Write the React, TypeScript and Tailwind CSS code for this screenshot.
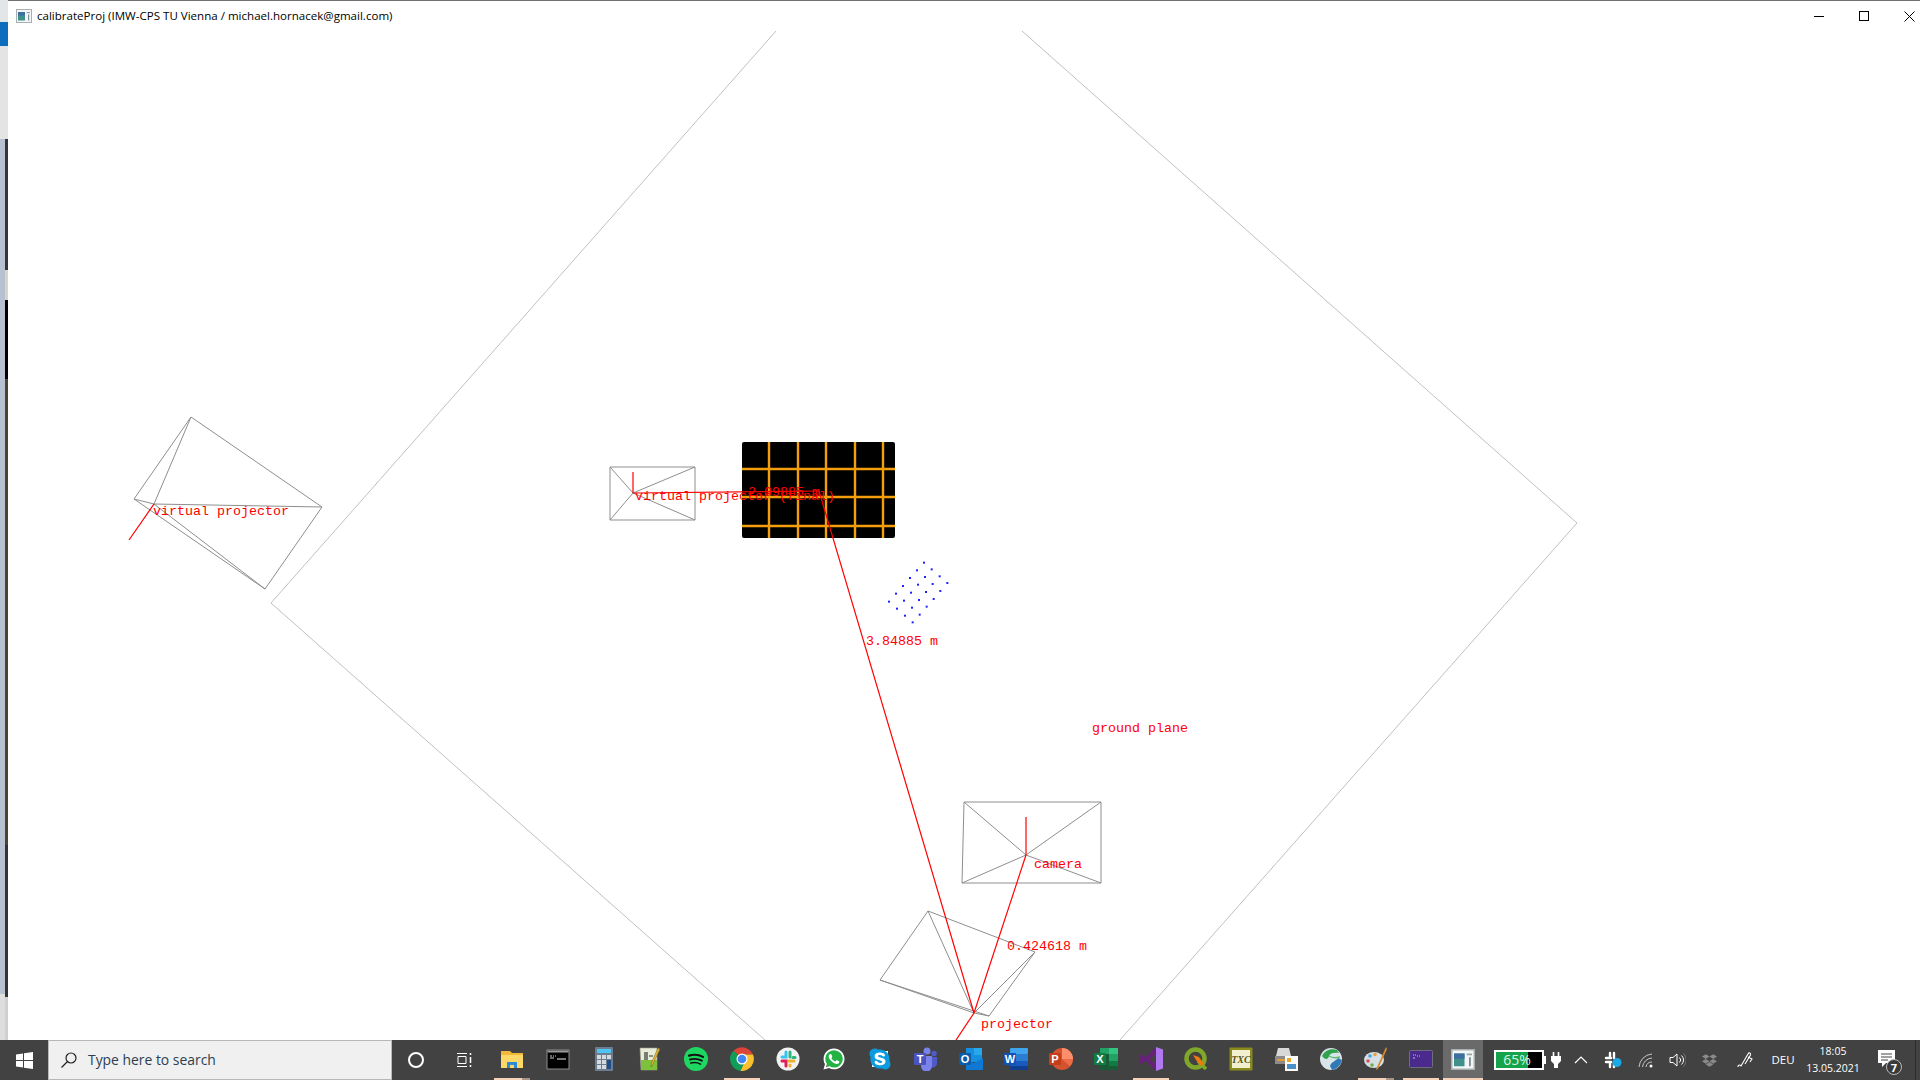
import React from 'react';
import { FaDropbox, FaSkype, FaWhatsapp } from 'react-icons/fa';

// scene geometry, all in screen pixels (the svg viewBox starts at the window's corner)
const GRAY_LINES = [
  // virtual projector
  [191, 417, 322, 507], [322, 507, 265, 589], [265, 589, 134, 499], [134, 499, 191, 417],
  [154, 504, 191, 417], [154, 504, 322, 507], [154, 504, 265, 589], [154, 504, 134, 499],
  // virtual projector (final)
  [610, 467, 695, 467], [695, 467, 695, 520], [695, 520, 610, 520], [610, 520, 610, 467],
  [633, 493, 610, 467], [633, 493, 695, 467], [633, 493, 695, 520], [633, 493, 610, 520],
  // camera
  [964, 802, 1101, 802], [1101, 802, 1101, 883], [1101, 883, 962, 883], [962, 883, 964, 802],
  [1026, 855, 964, 802], [1026, 855, 1101, 802], [1026, 855, 1101, 883], [1026, 855, 962, 883],
  // projector
  [928, 911, 1035, 952], [1035, 952, 989, 1016], [989, 1016, 880, 980], [880, 980, 928, 911],
  [974, 1013, 928, 911], [974, 1013, 1035, 952], [974, 1013, 989, 1016], [974, 1013, 880, 980],
];

const RED_LINES = [
  [154, 504, 129, 540],
  [633, 493, 633, 472],
  [633, 493, 819, 491],
  [819, 491, 974, 1013],
  [1026, 855, 1026, 817],
  [1026, 855, 974, 1013],
  [974, 1013, 956, 1040],
];

const LABELS = [
  { x: 153, y: 515, text: 'virtual projector' },
  { x: 635, y: 500, text: 'virtual projector (final)' },
  { x: 748, y: 496, text: '2.09885 m' },
  { x: 866, y: 645, text: '3.84885 m' },
  { x: 1092, y: 732, text: 'ground plane' },
  { x: 1034, y: 868, text: 'camera' },
  { x: 1007, y: 950, text: '0.424618 m' },
  { x: 981, y: 1028, text: 'projector' },
];

const DOTS = [
  [222, 68], [245, 88], [269, 109], [292, 129],
  [201, 91], [225, 111], [248, 132], [271, 153],
  [180, 114], [204, 134], [228, 156], [251, 177],
  [159, 138], [183, 158], [207, 180], [230, 200],
  [138, 161], [162, 182], [186, 203], [209, 224],
  [117, 185], [141, 206], [165, 227], [188, 247],
];

const GRID_X = [769, 798, 826, 855, 883];
const GRID_Y = [469, 497, 526];

function Scene() {
  return (
    <svg className="absolute inset-0 h-full w-full" viewBox="8 31 1912 1009">
      <polyline points="776,31 271,603 765,1040" fill="none" stroke="#c0c0c0" strokeWidth="1" />
      <polyline points="1022,31 1577,523 1120,1040" fill="none" stroke="#c0c0c0" strokeWidth="1" />

      <rect x="742" y="442" width="153" height="96" rx="2" fill="#000" />
      {GRID_X.map((x) => (
        <line key={x} x1={x} y1="442" x2={x} y2="538" stroke="#f59e0b" strokeWidth="2.4" />
      ))}
      {GRID_Y.map((y) => (
        <line key={y} x1="742" y1={y} x2="895" y2={y} stroke="#f59e0b" strokeWidth="2.4" />
      ))}

      {GRAY_LINES.map((l, i) => (
        <line key={i} x1={l[0]} y1={l[1]} x2={l[2]} y2={l[3]} stroke="#8e8e8e" strokeWidth="1" />
      ))}
      {RED_LINES.map((l, i) => (
        <line key={i} x1={l[0]} y1={l[1]} x2={l[2]} y2={l[3]} stroke="#ff0000" strokeWidth="1.2" />
      ))}
      {DOTS.map((d, i) => (
        <rect key={i} x={850 + d[0] / 3 - 1} y={540 + d[1] / 3 - 1} width="2" height="2" fill="#2222ff" />
      ))}
      {LABELS.map((l) => (
        <text key={l.text} x={l.x} y={l.y} fill="#ff0000" className="font-['Liberation_Mono',monospace] text-[13.33px]">
          {l.text}
        </text>
      ))}
    </svg>
  );
}

function WinIcon({ size }: { size: number }) {
  return (
    <svg width={size} height={size * 0.875} viewBox="0 0 16 14">
      <rect x="0.5" y="0.5" width="15" height="13" fill="#f4f6f6" stroke="#a9aeb0" />
      <rect x="2" y="3" width="7" height="8.5" fill="#3f8f8a" />
      <rect x="2" y="3" width="7" height="3.5" fill="#3c6f9f" />
      <rect x="10.5" y="3" width="3.5" height="1.2" fill="#9aa6ad" />
      <rect x="12" y="5.5" width="1.2" height="6" fill="#7d8b94" />
    </svg>
  );
}

const Svg = ({ children, size = 24 }: { children: React.ReactNode; size?: number }) => (
  <svg width={size} height={size} viewBox="0 0 24 24">
    {children}
  </svg>
);

const Letter = ({ x, y, size, fill = '#fff', children }: { x: number; y: number; size: number; fill?: string; children: string }) => (
  <text x={x} y={y} fontSize={size} fontWeight="700" fill={fill} textAnchor="middle" className="font-['Liberation_Sans',sans-serif]">
    {children}
  </text>
);

const APPS: { id: string; icon: React.ReactNode; bar?: boolean; stacked?: boolean }[] = [
  {
    id: 'explorer',
    bar: true,
    stacked: true,
    icon: (
      <Svg>
        <path d="M1 4h9l2 2h11v15H1z" fill="#f0b93a" />
        <path d="M1 8h22v13H1z" fill="#fcd869" />
        <path d="M7 21v-6h10v6h-3v-3h-4v3z" fill="#2a8ad4" />
      </Svg>
    ),
  },
  {
    id: 'cmd',
    icon: (
      <Svg>
        <rect x="1" y="3" width="22" height="19" fill="#000" stroke="#8d8d8d" />
        <rect x="1.5" y="3.5" width="21" height="2" fill="#9a9a9a" />
        <path d="M4 9h2M7 9h1M9 9h1M4 11h4" stroke="#ccc" strokeWidth="1" />
        <path d="M11 12h9" stroke="#eee" strokeWidth="1" />
      </Svg>
    ),
  },
  {
    id: 'calc',
    icon: (
      <Svg>
        <rect x="3" y="0" width="18" height="24" rx="1" fill="#6d7d90" />
        <rect x="5" y="2" width="14" height="4" fill="#50c4f2" />
        <path d="M5 8h4v4H5zM10 8h4v4h-4zM15 8h4v4h-4zM5 13h4v4H5zM10 13h4v4h-4zM5 18h4v4H5zM10 18h4v4h-4z" fill="#d5dae0" />
        <rect x="15" y="13" width="4" height="9" fill="#1f4f86" />
      </Svg>
    ),
  },
  {
    id: 'notepad',
    icon: (
      <Svg>
        <path d="M2 1h17v22H3z" fill="#e9ecd9" stroke="#9a9a8a" strokeWidth="0.6" />
        <path d="M3 13h16v10H3z" fill="#7ec13c" />
        <path d="M7 5v8M9 5v8" stroke="#333" strokeWidth="1.2" />
        <path d="M11 9h4" stroke="#555" strokeWidth="1.2" />
        <path d="M22 2l-7 15-2 3 .4-4L20 1z" fill="#e2b93a" stroke="#7a5a10" strokeWidth="0.5" />
      </Svg>
    ),
  },
  {
    id: 'spotify',
    icon: (
      <Svg>
        <circle cx="12" cy="12" r="12" fill="#1ed760" />
        <path d="M5 8.6c4.600-1.300 9.800-1 14 1.300" fill="none" stroke="#111" strokeWidth="2.200" strokeLinecap="round" />
        <path d="M6 12.500c4-1 8.300-.7 11.800 1.200" fill="none" stroke="#111" strokeWidth="1.900" strokeLinecap="round" />
        <path d="M6.800 16c3.400-.8 6.800-.5 9.700 1.100" fill="none" stroke="#111" strokeWidth="1.600" strokeLinecap="round" />
      </Svg>
    ),
  },
  {
    id: 'chrome',
    bar: true,
    icon: (
      <Svg>
        <path d="M12 12L3.500 3.700A12 12 0 0 1 23 7.500H12z" fill="#db4437" />
        <path d="M12 12L3.500 3.700A12 12 0 0 0 10.500 23.900L16 12z" fill="#0f9d58" />
        <path d="M23 7.500A12 12 0 0 1 10.500 23.900L16 12 12 7.500z" fill="#fbc02d" />
        <circle cx="12" cy="12" r="5.500" fill="#fff" />
        <circle cx="12" cy="12" r="4.300" fill="#4285f4" />
      </Svg>
    ),
  },
  {
    id: 'slack',
    icon: (
      <Svg>
        <circle cx="12" cy="12" r="11.500" fill="#f2f2f2" />
        <path d="M10 5v5H6" fill="none" stroke="#36c5f0" strokeWidth="3" strokeLinecap="round" />
        <path d="M14 5v5" fill="none" stroke="#2eb67d" strokeWidth="3" strokeLinecap="round" />
        <path d="M19 10.500h-2" fill="none" stroke="#2eb67d" strokeWidth="3" strokeLinecap="round" />
        <path d="M18 14h-5" fill="none" stroke="#ecb22e" strokeWidth="3" strokeLinecap="round" />
        <path d="M14 19v-1" fill="none" stroke="#ecb22e" strokeWidth="3" strokeLinecap="round" />
        <path d="M10 19v-5H6" fill="none" stroke="#e01e5a" strokeWidth="3" strokeLinecap="round" />
      </Svg>
    ),
  },
  {
    id: 'whatsapp',
    icon: (
      <span className="relative flex h-6 w-6 items-center justify-center">
        <span className="absolute h-5 w-5 rounded-full bg-[#25b244]" />
        <FaWhatsapp className="relative h-6 w-6 text-white" />
      </span>
    ),
  },
  {
    id: 'skype',
    icon: (
      <span className="relative flex h-6 w-6 items-center justify-center">
        <span className="absolute h-4 w-4 bg-white" />
        <FaSkype className="relative h-6 w-6 text-[#0a9be0]" />
      </span>
    ),
  },
  {
    id: 'teams',
    icon: (
      <Svg>
        <circle cx="13" cy="4" r="3.500" fill="#7b83eb" />
        <circle cx="20" cy="6.500" r="2.800" fill="#5059c9" />
        <path d="M16 10h7v7a4 4 0 0 1-7 2z" fill="#5059c9" />
        <path d="M7 9h11v10a5.500 5.500 0 0 1-11 0z" fill="#7b83eb" />
        <rect x="0" y="6" width="12" height="12" rx="1" fill="#4b53bc" />
        <Letter x={6} y={16} size={11}>T</Letter>
      </Svg>
    ),
  },
  {
    id: 'outlook',
    icon: (
      <Svg>
        <rect x="7" y="1" width="16" height="14" fill="#1490df" />
        <rect x="15" y="1" width="8" height="7" fill="#28a8ea" />
        <path d="M7 12l8 4 9-5v12H7z" fill="#0f78d4" />
        <rect x="0" y="6" width="12" height="12" rx="1" fill="#0a5ca8" />
        <Letter x={6} y={16} size={11}>O</Letter>
      </Svg>
    ),
  },
  {
    id: 'word',
    icon: (
      <Svg>
        <rect x="6" y="1" width="18" height="6" rx="1" fill="#41a5ee" />
        <rect x="6" y="7" width="18" height="7" fill="#2b7cd3" />
        <rect x="6" y="14" width="18" height="5" fill="#185abd" />
        <rect x="6" y="19" width="18" height="4" rx="1" fill="#103f91" />
        <rect x="0" y="6" width="12" height="12" rx="1" fill="#1252b4" />
        <Letter x={6} y={16} size={11}>W</Letter>
      </Svg>
    ),
  },
  {
    id: 'powerpoint',
    icon: (
      <Svg>
        <circle cx="13" cy="12" r="11" fill="#d35230" />
        <path d="M13 1a11 11 0 0 1 11 11H13z" fill="#ff8f6b" />
        <path d="M13 12h11a11 11 0 0 1-3 7.500z" fill="#ed6c47" />
        <rect x="0" y="6" width="12" height="12" rx="1" fill="#c43e1c" />
        <Letter x={6} y={16} size={11}>P</Letter>
      </Svg>
    ),
  },
  {
    id: 'excel',
    icon: (
      <Svg>
        <rect x="6" y="1" width="18" height="22" rx="1" fill="#185c37" />
        <rect x="15" y="1" width="9" height="6" fill="#33c481" />
        <rect x="6" y="1" width="9" height="6" fill="#21a366" />
        <rect x="15" y="7" width="9" height="7" fill="#21a366" />
        <rect x="15" y="14" width="9" height="5" fill="#107c41" />
        <rect x="0" y="6" width="12" height="12" rx="1" fill="#107c41" />
        <Letter x={6} y={16} size={11}>X</Letter>
      </Svg>
    ),
  },
  {
    id: 'vs',
    bar: true,
    icon: (
      <Svg>
        <path d="M17 0l7 2.500v19L17 24V0z" fill="#b179f1" />
        <path d="M17 0L6.500 10.500 2 7 0 8v8l2 1 4.500-3.500L17 24v-6.500L10.500 12 17 6.500z" fill="#68217a" />
      </Svg>
    ),
  },
  {
    id: 'qgis',
    icon: (
      <Svg>
        <circle cx="11.500" cy="11.500" r="9" fill="none" stroke="#7fa82a" strokeWidth="4.500" />
        <path d="M14 14l8 8" stroke="#7fa82a" strokeWidth="3.500" />
        <path d="M9 8l6 2 5 7-3 2-5-6z" fill="#ee7913" />
      </Svg>
    ),
  },
  {
    id: 'texc',
    icon: (
      <Svg>
        <rect x="0.500" y="0.500" width="23" height="23" rx="1" fill="#8a8a1f" />
        <rect x="3" y="3" width="18" height="18" fill="#f2f0cf" />
        <text x="12" y="16" fontSize="10" fontStyle="italic" fontWeight="700" fill="#55551a" textAnchor="middle" className="font-['Liberation_Serif',serif]">
          TXC
        </text>
      </Svg>
    ),
  },
  {
    id: 'printer',
    icon: (
      <Svg>
        <path d="M4 1h11l2 8H2z" fill="#d8d8d8" />
        <rect x="1" y="9" width="17" height="8" fill="#8b8b8b" />
        <rect x="3" y="12" width="10" height="2" fill="#e79b2c" />
        <rect x="11" y="9" width="13" height="15" fill="#fafafa" />
        <rect x="13" y="11" width="4" height="4" fill="#e7a92c" />
        <rect x="13" y="17" width="9" height="5" fill="#4a90c8" />
      </Svg>
    ),
  },
  {
    id: 'globe',
    icon: (
      <Svg>
        <circle cx="12" cy="12" r="11" fill="#d9e4e8" />
        <path d="M3 9c3-6 9-8 15-6l2 3c-5-1-9 0-10 3-1 4-4 4-7 0z" fill="#2ea24c" />
        <path d="M13 23c5-1 9-5 10-10l-4-2c-2 3-7 4-8 8z" fill="#2f79b5" />
        <path d="M10 9c3 2 7 2 11 1" fill="none" stroke="#5dbb6a" strokeWidth="1.500" />
      </Svg>
    ),
  },
  {
    id: 'paint',
    bar: true,
    stacked: true,
    icon: (
      <Svg>
        <ellipse cx="10" cy="13" rx="10" ry="8" fill="#d5dfe6" />
        <circle cx="6" cy="9" r="1.800" fill="#4aa3df" />
        <circle cx="11" cy="7.500" r="1.800" fill="#e8a13a" />
        <circle cx="4" cy="14" r="1.800" fill="#d9534f" />
        <circle cx="8" cy="18" r="1.800" fill="#6ab04c" />
        <path d="M22 0l1 2-9 20-2 1 1-3z" fill="#d88a2e" />
      </Svg>
    ),
  },
  {
    id: 'terminal',
    bar: true,
    icon: (
      <Svg>
        <rect x="0.500" y="3.500" width="23" height="17" rx="1" fill="#4a2a8c" stroke="#6d6d7d" />
        <path d="M4 8h1M6 8h1M8 9h1M10 9h1M4 11h2" stroke="#c6bde0" strokeWidth="1" />
      </Svg>
    ),
  },
];

export default function App() {
  return (
    <div className="flex h-screen w-[1920px] flex-col overflow-hidden bg-white font-['Open_Sans',sans-serif]">
      <div className="flex h-[1040px]">
        {/* bit of the desktop showing behind the window */}
        <div className="flex w-[5px] flex-col">
          <div className="h-[22px] bg-[#e2e6e6]" />
          <div className="h-[24px] bg-[#0c6ebd]" />
          <div className="h-[93px] bg-[#e4e4e4]" />
          <div className="h-[855px] bg-[#b6c2d2]" />
          <div className="flex-1 bg-[#dedede]" />
        </div>
        <div className="flex w-[3px] flex-col">
          <div className="h-[22px] bg-[#e2e6e6]" />
          <div className="h-[24px] bg-[#0c6ebd]" />
          <div className="h-[93px] bg-[#e4e4e4]" />
          <div className="h-[131px] bg-[#33343c]" />
          <div className="h-[30px] bg-[#d8d4c8]" />
          <div className="h-[79px] bg-black" />
          <div className="h-[466px] bg-[#4e4232]" />
          <div className="h-[152px] bg-[#333333]" />
          <div className="flex-1 bg-[#d0d0d0]" />
        </div>

        <div className="flex flex-1 flex-col border-t border-[#707070]">
          <div className="flex h-[30px] items-center">
            <div className="ml-[8px] flex w-[21px] shrink-0">
              <WinIcon size={16} />
            </div>
            <span className="text-[11.55px] leading-none text-black">calibrateProj (IMW-CPS TU Vienna / michael.hornacek@gmail.com)</span>
            <div className="ml-auto flex items-center">
              <div className="flex w-[45px] justify-center">
                <div className="h-px w-[10px] bg-black" />
              </div>
              <div className="flex w-[45px] justify-center">
                <div className="h-[10px] w-[10px] border border-black" />
              </div>
              <div className="flex w-[34px] pl-[18px]">
                <svg width="11" height="11" viewBox="0 0 11 11">
                  <path d="M0.500 0.500l10 10M10.500 0.500l-10 10" stroke="#000" strokeWidth="1" />
                </svg>
              </div>
            </div>
          </div>
          <div className="relative flex-1 overflow-hidden">
            <Scene />
          </div>
        </div>
      </div>

      {/* taskbar */}
      <div className="flex h-10 items-center bg-[#424242] text-white">
        <div className="flex h-full w-12 items-center justify-center">
          <svg width="17" height="17" viewBox="0 0 17 17">
            <path d="M0 2.500l7-1v6.500H0zM8 1.300L17 0v8H8zM0 9h7v6.500l-7-1zM8 9h9v8l-9-1.300z" fill="#fff" />
          </svg>
        </div>
        <div className="flex h-full w-[344px] items-center border border-[#b8b8b8] bg-[#f0f0f0]">
          <svg className="ml-[11px]" width="18" height="18" viewBox="0 0 18 18">
            <circle cx="11" cy="7" r="5" fill="none" stroke="#222" strokeWidth="1.200" />
            <path d="M7.500 10.500L1.500 16.500" stroke="#222" strokeWidth="1.200" />
          </svg>
          <span className="ml-[10px] text-[13.9px] text-[#2c3e50]">Type here to search</span>
        </div>
        <div className="flex h-full w-12 items-center justify-center">
          <div className="h-4 w-4 rounded-full border-[2.5px] border-white" />
        </div>
        <div className="flex h-full w-[47px] items-center justify-center">
          <svg width="16" height="16" viewBox="0 0 16 16">
            <path d="M1 1.500h10M1 14.500h10M2 4.500h8v7H2z" fill="none" stroke="#fff" strokeWidth="1" />
            <path d="M14.500 1v2M14.500 5v6M14.500 13v2" stroke="#fff" strokeWidth="1.500" />
          </svg>
        </div>

        <div className="ml-[2px] flex h-full">
          {APPS.map((app, i) => (
            <div key={app.id} className={`relative flex h-full items-center justify-center pb-[2px] ${i < 9 ? 'w-[46px]' : 'w-[45px]'}`}>
              {app.icon}
              {app.bar && (
                <div className="absolute bottom-0 left-1/2 flex h-[2px] w-[36px] -translate-x-1/2 bg-[#f6d2b8]">
                  {app.stacked && <div className="ml-auto w-[8px] bg-[#a89688]" />}
                </div>
              )}
            </div>
          ))}
        </div>
        <div className="relative flex h-full w-10 items-center justify-center bg-[#6a6a6a] pb-[2px]">
          <WinIcon size={24} />
          <div className="absolute inset-x-0 bottom-0 h-[2px] bg-[#f6d2b8]" />
        </div>

        {/* tray */}
        <div className="ml-[11px] flex items-center">
          <div className="relative flex h-[20px] w-[50px] border-2 border-white bg-black">
            <div className="w-[32px] bg-[#16a34a]" />
            <span className="absolute inset-0 flex items-center justify-center pr-[4px] text-[14px] leading-none text-[#d8f5e4]">65%</span>
          </div>
          <div className="h-2 w-[2px] bg-white" />
        </div>
        <div className="flex w-5 justify-center">
          <svg width="10" height="16" viewBox="0 0 10 16">
            <path d="M2.500 0v4M7.500 0v4" stroke="#fff" strokeWidth="1.600" />
            <path d="M0 4h10v5l-3 3v4H3v-4L0 9z" fill="#fff" />
          </svg>
        </div>
        <div className="flex w-[30px] justify-center">
          <svg width="14" height="8" viewBox="0 0 14 8">
            <path d="M1 7l6-6 6 6" fill="none" stroke="#fff" strokeWidth="1.200" />
          </svg>
        </div>
        <div className="flex w-[33px] justify-center">
          <svg width="18" height="18" viewBox="0 0 18 18">
            <path d="M6 2v5M10 2v5M2 7h5M2 11h5M10 11v5M6 11v5" stroke="#fff" strokeWidth="2.400" strokeLinecap="round" />
            <circle cx="13" cy="11.500" r="4.500" fill="#19a9e5" />
          </svg>
        </div>
        <div className="flex w-[34px] justify-center">
          <svg width="16" height="16" viewBox="0 0 16 16">
            <path d="M1 15A14 14 0 0 1 14 2M4.500 15A10 10 0 0 1 14 6M8 15A6 6 0 0 1 14 10" fill="none" stroke="#c8c8c8" strokeWidth="1" />
            <circle cx="13" cy="14" r="1.500" fill="#fff" />
          </svg>
        </div>
        <div className="flex w-7 justify-center">
          <svg width="17" height="14" viewBox="0 0 17 14">
            <path d="M1 4.500h3l4-3.500v12l-4-3.500H1z" fill="none" stroke="#fff" strokeWidth="1" />
            <path d="M10.500 4.500a3.500 3.500 0 0 1 0 5M12.500 2.500a6 6 0 0 1 0 9" fill="none" stroke="#fff" strokeWidth="1" />
            <path d="M14.500 0.500a9 9 0 0 1 0 13" fill="none" stroke="#777" strokeWidth="1" />
          </svg>
        </div>
        <div className="flex w-9 justify-center">
          <FaDropbox className="h-[15px] w-[15px] text-[#8a8a8a]" />
        </div>
        <div className="flex w-9 justify-center">
          <svg width="16" height="18" viewBox="0 0 16 18">
            <path d="M1 16c0-3 3-2 3-.500M4 15l7-12c1-2 3-1 2.500 1L8 13M11 6l4 2-2 3" fill="none" stroke="#fff" strokeWidth="1.100" />
          </svg>
        </div>
        <div className="flex w-10 justify-center text-[11.5px]">DEU</div>
        <div className="flex w-[60px] flex-col items-center text-[10.5px] leading-[17px]">
          <span>18:05</span>
          <span>13.05.2021</span>
        </div>
        <div className="relative flex h-full w-12 items-center justify-center">
          <svg className="mb-[3px]" width="18" height="18" viewBox="0 0 18 18">
            <path d="M0 0h17v13H8l-4 4v-4H0z" fill="#fff" />
            <path d="M3 4h11M3 7h11M3 10h7" stroke="#444" strokeWidth="1" />
          </svg>
          <div className="absolute left-[23px] top-[19px] flex h-4 w-4 items-center justify-center rounded-full border border-[#bbb] bg-[#3a3a3a] text-[11px] font-bold leading-none">
            7
          </div>
        </div>
        <div className="ml-[4px] h-full w-px bg-[#2c2c2c]" />
      </div>
    </div>
  );
}
